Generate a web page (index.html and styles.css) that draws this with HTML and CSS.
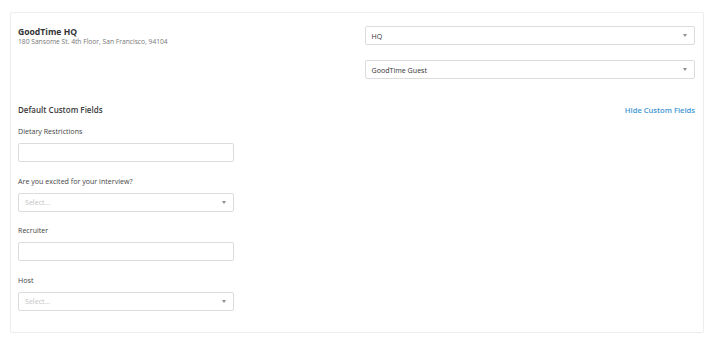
FILE: index.html
```html
<!DOCTYPE html>
<html lang="en">
  <head>
    <meta charset="UTF-8" />
    <meta name="viewport" content="width=device-width, initial-scale=1.0" />
    <title>Location Details</title>
    <link rel="stylesheet" href="styles.css">
  </head>
  <body>
    <div class="card">
      <div class="top-row">
        <div class="location">
          <div class="location-name">GoodTime HQ</div>
          <div class="location-address">180 Sansome St. 4th Floor, San Francisco, 94104</div>
        </div>
        <div class="location-selects">
          <div class="select-box">
            <span>HQ</span>
            <span class="caret"></span>
          </div>
          <div class="select-box">
            <span>GoodTime Guest</span>
            <span class="caret"></span>
          </div>
        </div>
      </div>

      <div class="section-head">
        <div class="section-title">Default Custom Fields</div>
        <a class="section-link" href="#">Hide Custom Fields</a>
      </div>

      <div class="fields">
        <div class="field">
          <label>Dietary Restrictions</label>
          <div class="text-box"></div>
        </div>
        <div class="field">
          <label>Are you excited for your interview?</label>
          <div class="select-box placeholder">
            <span>Select...</span>
            <span class="caret"></span>
          </div>
        </div>
        <div class="field">
          <label>Recruiter</label>
          <div class="text-box"></div>
        </div>
        <div class="field">
          <label>Host</label>
          <div class="select-box placeholder">
            <span>Select...</span>
            <span class="caret"></span>
          </div>
        </div>
      </div>
    </div>
  </body>
</html>
```

FILE: styles.css
```css
body {
  margin: 0;
  font-family: "Open Sans", Arial, sans-serif;
  font-size: 8px;
  color: #3a3a3a;
  background-color: #ffffff;
}

.card {
  margin: 12px 10px 0 10px;
  height: 321px;
  box-sizing: border-box;
  padding: 13px 8px 0 7px;
  border: 1px solid #ededed;
  border-radius: 2px;
}

.top-row {
  display: grid;
  grid-template-columns: 1fr 1fr;
  column-gap: 16px;
}

.location-name {
  font-size: 8.6px;
  font-weight: 700;
  line-height: 12px;
  color: #333;
}

.location-address {
  font-size: 6.7px;
  line-height: 8px;
  color: #777;
}

.location-selects {
  display: flex;
  flex-direction: column;
  gap: 15px;
}

.select-box,
.text-box {
  height: 19px;
  box-sizing: border-box;
  border: 1px solid #dcdcdc;
  border-radius: 2px;
  background-color: #fff;
}

.select-box {
  display: flex;
  align-items: center;
  justify-content: space-between;
  padding: 0 7px 0 6px;
  font-size: 7.1px;
  color: #333;
}

.select-box.placeholder {
  color: #c4c4c4;
}

.caret {
  width: 0;
  height: 0;
  border-left: 2.5px solid transparent;
  border-right: 2.5px solid transparent;
  border-top: 3px solid #8f8f8f;
}

.section-head {
  display: flex;
  justify-content: space-between;
  align-items: center;
  margin-top: 25px;
  line-height: 12px;
}

.section-title {
  font-size: 8px;
  font-weight: 600;
  color: #3a3a3a;
}

.section-link {
  font-size: 7.6px;
  font-weight: 600;
  color: #3d96d4;
  text-decoration: none;
}

.fields {
  width: 216px;
  margin-top: 9px;
  display: flex;
  flex-direction: column;
  gap: 12.5px;
}

.field {
  display: flex;
  flex-direction: column;
  gap: 6px;
}

.field label {
  line-height: 12px;
  font-size: 7.1px;
  color: #444;
}
```
